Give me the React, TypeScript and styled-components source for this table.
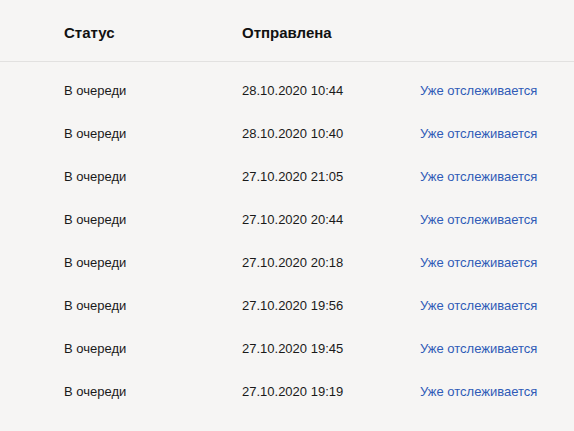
import React from "react";
import styled, { createGlobalStyle } from "styled-components";

const Global = createGlobalStyle`
  html, body { margin: 0; padding: 0; background: #f6f5f4; }
  body { font-family: "Liberation Sans", Arial, sans-serif; }
`;

const Table = styled.div`
  width: 574px;
  background: #f6f5f4;
`;

const Header = styled.div`
  display: grid;
  grid-template-columns: 178px 178px 1fr;
  padding-left: 64px;
  height: 62px;
  align-items: center;
  border-bottom: 1px solid #e2e1e0;
  box-sizing: border-box;
  font-weight: bold;
  font-size: 15px;
  color: #111;
  padding-top: 3px;
`;

const Body = styled.div`
  padding-top: 7px;
`;

const Row = styled.div`
  display: grid;
  grid-template-columns: 178px 178px 1fr;
  padding-left: 64px;
  height: 43px;
  align-items: center;
  font-size: 13px;
  color: #1a1a1a;
`;

const Link = styled.a`
  color: #2f5bb7;
  text-decoration: none;
`;

const rows = [
  "28.10.2020 10:44",
  "28.10.2020 10:40",
  "27.10.2020 21:05",
  "27.10.2020 20:44",
  "27.10.2020 20:18",
  "27.10.2020 19:56",
  "27.10.2020 19:45",
  "27.10.2020 19:19",
];

export default function App() {
  return (
    <>
      <Global />
      <Table>
        <Header>
          <span>Статус</span>
          <span>Отправлена</span>
          <span />
        </Header>
        <Body>
          {rows.map((d) => (
            <Row key={d}>
              <span>В очереди</span>
              <span>{d}</span>
              <Link>Уже отслеживается</Link>
            </Row>
          ))}
        </Body>
      </Table>
    </>
  );
}
